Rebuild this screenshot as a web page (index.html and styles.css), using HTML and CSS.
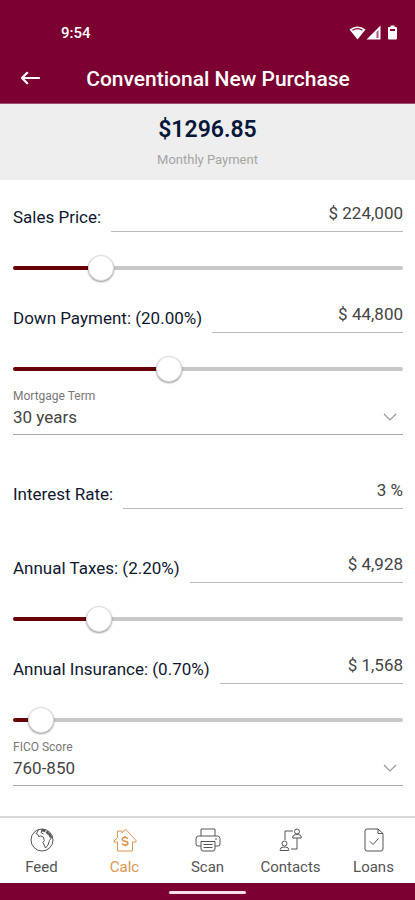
FILE: index.html
```html
<!DOCTYPE html>
<html lang="en">
<head>
<meta charset="utf-8">
<meta name="viewport" content="width=device-width, initial-scale=1">
<title>Conventional New Purchase</title>
<link rel="stylesheet" href="styles.css">
</head>
<body>
<header class="top">
  <div class="status">
    <span class="clock">9:54</span>
    <div class="status-icons">
      <svg width="17" height="16" viewBox="0 0 17 16"><path d="M.5 4.6Q8.500-1.800 16.500 4.600L8.500 14.500Z" fill="currentColor"/><path d="M3.500 5.200Q8.500 2 13.500 5.200" fill="none" stroke="#7b0031" stroke-width="1.300"/></svg>
      <svg width="15" height="16" viewBox="0 0 15 16"><path d="M14.500.5V14.500H.5Z" fill="currentColor"/><path d="M12.500 5v8h-2V7Z" fill="#a8577a"/></svg>
      <svg class="battery" width="9" height="16" viewBox="0 0 9 16"><path d="M2.500.500h4V2H8q1 0 1 1v10.500q0 1-1 1H1q-1 0-1-1V3q0-1 1-1h1.500Z" fill="currentColor"/><path d="M2 4h5v2H2Z" fill="#7b0031"/></svg>
    </div>
  </div>
  <div class="bar">
    <button class="back" type="button" aria-label="Back"><svg width="20" height="16" viewBox="0 0 20 16" fill="none" stroke="currentColor" stroke-width="2.200" stroke-linecap="round" stroke-linejoin="round"><path d="M19 8H2M7.200 2.800 2 8l5.200 5.200"/></svg></button>
    <h1 class="title">Conventional New Purchase</h1>
  </div>
</header>
<section class="payment">
  <output class="amount">$1296.85</output>
  <span class="caption">Monthly Payment</span>
</section>
<main class="form">
  <div class="field">
    <label for="price">Sales Price:</label>
    <input class="value" id="price" type="text" value="$ 224,000">
  </div>
  <input class="slider" type="range" aria-label="Sales price" min="0" max="1000" value="206" style="--v:.206">
  <div class="field after-slider">
    <label for="down">Down Payment: (20.00%)</label>
    <input class="value" id="down" type="text" value="$ 44,800">
  </div>
  <input class="slider" type="range" aria-label="Down payment" min="0" max="1000" value="393" style="--v:.393">
  <div class="choice">
    <label for="term">Mortgage Term</label>
    <select id="term"><option>30 years</option></select>
    <svg class="chevron" width="14" height="8" viewBox="0 0 14 8"><path d="M1 1l6 6 6-6" fill="none" stroke="currentColor" stroke-width="1.200"/></svg>
  </div>
  <div class="field spaced">
    <label for="rate">Interest Rate:</label>
    <input class="value" id="rate" type="text" value="3 %">
  </div>
  <div class="field spaced">
    <label for="taxes">Annual Taxes: (2.20%)</label>
    <input class="value" id="taxes" type="text" value="$ 4,928">
  </div>
  <input class="slider" type="range" aria-label="Annual taxes" min="0" max="1000" value="201" style="--v:.201">
  <div class="field after-slider">
    <label for="insurance">Annual Insurance: (0.70%)</label>
    <input class="value" id="insurance" type="text" value="$ 1,568">
  </div>
  <input class="slider" type="range" aria-label="Annual insurance" min="0" max="1000" value="41" style="--v:.041">
  <div class="choice">
    <label for="fico">FICO Score</label>
    <select id="fico"><option>760-850</option></select>
    <svg class="chevron" width="14" height="8" viewBox="0 0 14 8"><path d="M1 1l6 6 6-6" fill="none" stroke="currentColor" stroke-width="1.200"/></svg>
  </div>
</main>
<nav class="tabs">
  <a class="tab" href="#feed">
    <svg width="24" height="24" viewBox="0 0 24 24"><circle cx="12" cy="12" r="11"/><path d="M8.300 1.500 7.500 4l-1.500 1.500 2 1 .5 2 2-.5 2.800 1 1 3.500-1.300 2 2.500 5.500 2.500-3 1.500-4.500 3-4M12 1.500l-1 3 2.500 1.500"/><path d="M11.500 2l4 1M16.500 3.500l2 2.500M19 5.500l2 4" stroke-width="2.400"/></svg>
    <span>Feed</span>
  </a>
  <a class="tab active" href="#calc">
    <svg width="24" height="24" viewBox="0 0 24 24"><path d="M4.500 14v9h15v-9h3.500v-1.500L12.500 1 9 4.800V3H4.500v6.500L1 13v1Z"/><path class="dollar" d="M15 10.800q-.8-1.300-3-1.300-2.800 0-2.800 1.800 0 1.700 2.800 1.900t2.900 2q0 1.900-2.900 1.900-2.300 0-3.100-1.400M12 8v1.500M12 17v1.600"/></svg>
    <span>Calc</span>
  </a>
  <a class="tab" href="#scan">
    <svg width="26" height="24" viewBox="0 0 26 24"><path d="M6 8V1h14v7M6 18H3q-2 0-2-2v-5.500Q1 8 3.500 8h19Q25 8 25 10.500V16q0 2-2 2h-3M6 18v-4.500h14V18M6 18v3q0 2 2 2h10q2 0 2-2v-3M8.500 16.500h9M8.500 19.500h9M20 11h2"/></svg>
    <span>Scan</span>
  </a>
  <a class="tab" href="#contacts">
    <svg width="24" height="24" viewBox="0 0 24 24"><path d="M6 12V3h8M18 10v11h-6"/><circle cx="18" cy="3.500" r="2.500"/><path d="M13.700 10V9q0-2.200 3-2.400h2.600q3 .2 3 2.400v1Z"/><circle cx="5.500" cy="15.500" r="2.500"/><path d="M1.200 22.500v-1q0-2.200 3-2.400h2.600q3 .2 3 2.400v1Z"/></svg>
    <span>Contacts</span>
  </a>
  <a class="tab" href="#loans">
    <svg width="20" height="24" viewBox="0 0 20 24"><path d="M14 1H3Q1 1 1 3v18q0 2 2 2h14q2 0 2-2V5.500ZM14 1v4.500h5M6 13.500l3 3 5.500-6"/></svg>
    <span>Loans</span>
  </a>
</nav>
<footer class="home"><span class="pill"></span></footer>
</body>
</html>
```
FILE: styles.css
```css
* { box-sizing: border-box; }
body {
  margin: 0;
  min-height: 100vh;
  display: flex;
  flex-direction: column;
  background: #fff;
  color: #444;
  font-family: Roboto, "Liberation Sans", sans-serif;
}
.top { background: #7b0031; color: #fff; border-bottom: 1px solid #98506c; }
.status {
  display: flex;
  justify-content: space-between;
  align-items: center;
  height: 56px;
  padding: 10px 18px 0 61px;
}
.clock { font-size: 15px; line-height: 20px; font-weight: 500; }
.status-icons { display: flex; align-items: center; }
.battery { margin-left: 7px; }
.bar { position: relative; height: 47px; padding: 0 50px 0 71px; }
.back {
  position: absolute;
  left: 20px;
  top: 14px;
  padding: 0;
  border: 0;
  background: none;
  color: inherit;
  line-height: 0;
}
.title { margin: 0; font-size: 21px; line-height: 47px; font-weight: 500; text-align: center; }
.payment {
  display: flex;
  flex-direction: column;
  align-items: center;
  gap: 8px;
  height: 76px;
  padding-top: 12px;
  background: #eee;
}
.amount { font-size: 23px; line-height: 28px; font-weight: 600; color: #06183a; }
.caption { font-size: 13px; line-height: 16px; color: #a5a5a5; }
.form { padding: 16px 12px 29px 13px; }
.field { display: flex; align-items: flex-end; gap: 10px; height: 36px; }
.field label { padding-bottom: 5px; font-size: 17px; line-height: 20px; color: #10182f; white-space: nowrap; }
.value {
  flex: 1;
  min-width: 0;
  height: 36px;
  padding: 0 0 1px;
  border: 0;
  border-bottom: 1px solid #bbb;
  border-radius: 0;
  background: none;
  color: #444;
  font-family: inherit;
  font-size: 17px;
  text-align: right;
}
.after-slider { margin-top: 16px; }
.spaced { margin-top: 38px; }
.slider {
  -webkit-appearance: none;
  appearance: none;
  display: block;
  width: 100%;
  height: 26px;
  margin: 23px 0 0;
  background: none;
}
.slider::-webkit-slider-runnable-track {
  height: 4px;
  border-radius: 2px;
  background: linear-gradient(to right, #680008 calc(13px + (100% - 26px) * var(--v)), #c8c8c8 0);
}
.slider::-webkit-slider-thumb {
  -webkit-appearance: none;
  width: 26px;
  height: 26px;
  margin-top: -11px;
  border: 1px solid #ddd;
  border-radius: 50%;
  background: #fff;
  box-shadow: 0 1px 2px rgba(0, 0, 0, .4);
}
.choice { position: relative; display: flex; flex-direction: column; margin-top: 7px; }
.choice label { font-size: 12px; line-height: 14px; color: #777; }
.choice select {
  -webkit-appearance: none;
  appearance: none;
  height: 32px;
  padding: 0 0 4px;
  border: 0;
  border-bottom: 1px solid #aaa;
  border-radius: 0;
  background: none;
  color: #444;
  font-family: inherit;
  font-size: 17px;
}
.chevron { position: absolute; right: 6px; bottom: 14px; color: #999; pointer-events: none; }
.tabs {
  display: grid;
  grid-template-columns: repeat(5, 1fr);
  margin-top: auto;
  height: 67px;
  padding-top: 10px;
  border-top: 2px solid #d8d8d8;
}
.tab {
  display: flex;
  flex-direction: column;
  align-items: center;
  gap: 5px;
  color: #555;
  font-size: 15px;
  line-height: 20px;
  text-decoration: none;
}
.tab svg { fill: none; stroke: currentColor; stroke-width: 1; stroke-linejoin: round; }
.tab .dollar { stroke-width: 1.5; }
.active { color: #dc9550; }
.home { display: flex; justify-content: center; height: 17px; padding-top: 8px; background: #7b0031; }
.pill { width: 77px; height: 3px; border-radius: 2px; background: #f6dfe8; }
```
